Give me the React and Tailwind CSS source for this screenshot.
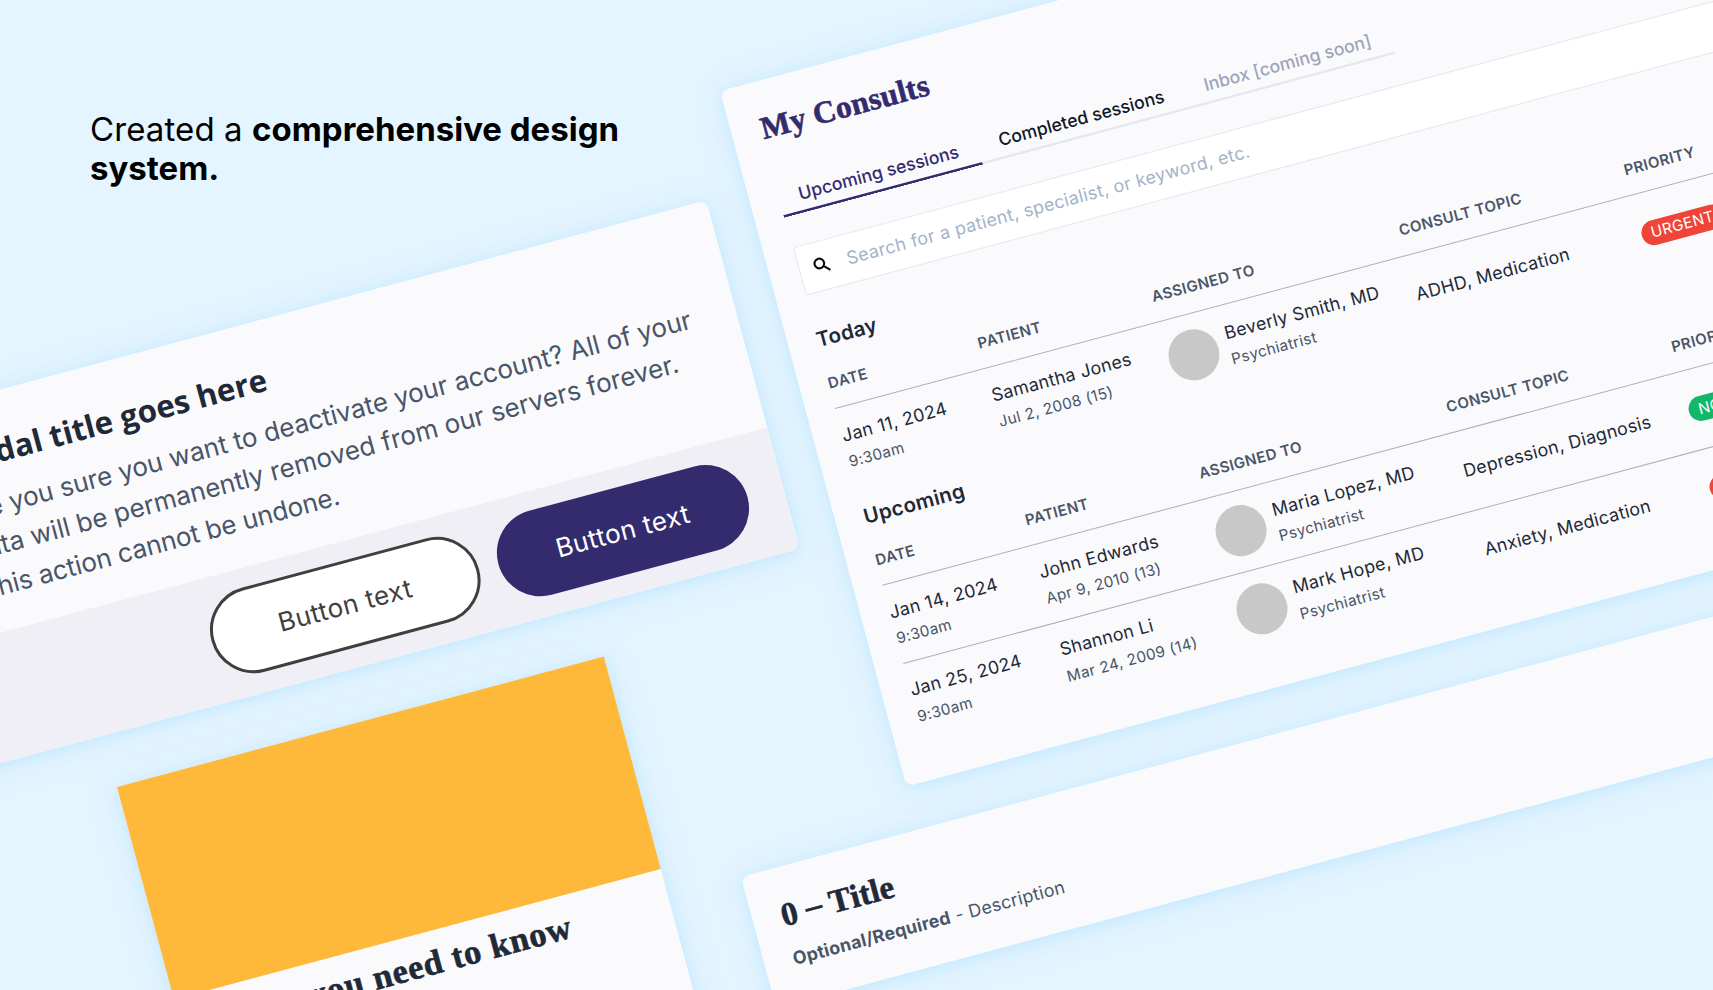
const SHADOW =
  "shadow-[0_2px_12px_rgba(170,228,255,0.5),0_3px_36px_rgba(208,234,255,0.75)]";

const SANS = "font-['Inter',sans-serif]";
const SERIF = "font-['Liberation_Serif',serif] [-webkit-text-stroke:0.6px_currentColor]";

const COLUMNS = "grid grid-cols-[155px_180px_256px_233px_1fr]";

const TODAY = [
  {
    date: "Jan 11, 2024",
    time: "9:30am",
    patient: "Samantha Jones",
    born: "Jul 2, 2008 (15)",
    doctor: "Beverly Smith, MD",
    topic: "ADHD, Medication",
    urgent: true,
  },
];

const UPCOMING = [
  {
    date: "Jan 14, 2024",
    time: "9:30am",
    patient: "John Edwards",
    born: "Apr 9, 2010 (13)",
    doctor: "Maria Lopez, MD",
    topic: "Depression, Diagnosis",
    urgent: false,
  },
  {
    date: "Jan 25, 2024",
    time: "9:30am",
    patient: "Shannon Li",
    born: "Mar 24, 2009 (14)",
    doctor: "Mark Hope, MD",
    topic: "Anxiety, Medication",
    urgent: true,
  },
];

function SearchIcon() {
  return (
    <svg viewBox="0 0 24 24" className="size-[21px] shrink-0 fill-black stroke-black stroke-[0.3]">
      <path d="M15.5 14h-.79l-.28-.27C15.41 12.59 16 11.11 16 9.5 16 5.91 13.09 3 9.5 3S3 5.91 3 9.5 5.91 16 9.5 16c1.61 0 3.09-.59 4.23-1.57l.27.28v.79l5 4.99L20.49 19l-4.99-5zm-6 0C7.01 14 5 11.99 5 9.5S7.01 5 9.5 5 14 7.01 14 9.5 11.99 14 9.5 14z" />
    </svg>
  );
}

function TwoLines({ main, sub }) {
  return (
    <div className="flex flex-col gap-[5.5px] pt-px">
      <div className="text-[17.8px] leading-6 tracking-[0.3px] text-[#1f2937]">{main}</div>
      <div className="text-[15.25px] leading-5 tracking-[0.33px] text-[#4a5568]">{sub}</div>
    </div>
  );
}

function Badge({ urgent }) {
  const color = urgent ? "bg-[#f04438]" : "bg-[#12b76a]";
  return (
    <span
      className={`${color} mt-0.5 flex h-[25px] w-fit items-center rounded-full px-[10px] text-[15.25px] leading-5 tracking-[0.3px] text-white`}
    >
      {urgent ? "URGENT" : "NON-URGENT"}
    </span>
  );
}

function SessionTable({ title, rows }) {
  return (
    <section>
      <h2 className="text-[20.5px] leading-7 font-semibold tracking-[0.3px] text-[#1f2937]">{title}</h2>
      <div
        className={`${COLUMNS} mt-[20.5px] h-[36.3px] border-b border-[#a9b2c0] text-[15px] leading-5 font-semibold tracking-[0.4px] text-[#4a5568]`}
      >
        <div>DATE</div>
        <div>PATIENT</div>
        <div>ASSIGNED TO</div>
        <div>CONSULT TOPIC</div>
        <div>PRIORITY</div>
      </div>
      {rows.map((row) => (
        <div
          key={row.date}
          className={`${COLUMNS} h-[80.9px] items-center border-b border-[#a9b2c0] last:border-transparent`}
        >
          <TwoLines main={row.date} sub={row.time} />
          <TwoLines main={row.patient} sub={row.born} />
          <div className="flex items-center gap-[10px]">
            <span className="size-[51px] shrink-0 rounded-full bg-[#c8c8c9]" />
            <TwoLines main={row.doctor} sub="Psychiatrist" />
          </div>
          <div className="text-[17.8px] leading-6 tracking-[0.3px] text-[#1f2937]">{row.topic}</div>
          <Badge urgent={row.urgent} />
        </div>
      ))}
    </section>
  );
}

function ConsultsCard() {
  return (
    <div
      className={`${SHADOW} ${SANS} absolute top-[90.6px] left-[719.6px] flex h-[720px] w-[1240px] origin-top-left -rotate-15 flex-col rounded-lg bg-[#fafafc] pt-7 pr-8 pl-[28.8px] whitespace-nowrap`}
    >
      <h1 className={`${SERIF} pl-px text-[31.5px] leading-10 font-bold tracking-[0.25px] text-[#332b6e]`}>
        My Consults
      </h1>
      <nav className="mt-[39.6px] flex text-center text-[17.65px] leading-6 font-medium">
        <div className="w-[206.3px] pb-[7.6px] text-[#332b6e] shadow-[inset_0_-2.5px_0_#332b6e]">
          Upcoming sessions
        </div>
        <div className="w-[213.5px] pb-[7.6px] text-gray-900 shadow-[inset_0_-2.5px_0_#e2e8f0]">
          Completed sessions
        </div>
        <div className="w-[213.5px] pb-[7.6px] text-[#9da5b9] shadow-[inset_0_-2.5px_0_#e2e8f0]">
          Inbox [coming soon]
        </div>
      </nav>
      <div className="mt-[30.8px] ml-px flex h-[50px] shrink-0 items-center gap-[14.8px] rounded border border-slate-200 bg-white pl-[12.6px]">
        <SearchIcon />
        <span className="text-[17.8px] leading-6 tracking-[0.34px] text-[#a3b3c9]">
          Search for a patient, specialist, or keyword, etc.
        </span>
      </div>
      <div className="mt-[32.4px] flex flex-col gap-[17px]">
        <SessionTable title="Today" rows={TODAY} />
        <SessionTable title="Upcoming" rows={UPCOMING} />
      </div>
    </div>
  );
}

function ModalCard() {
  return (
    <div
      className={`${SHADOW} ${SANS} absolute top-[441.3px] left-[-192.3px] flex h-[361px] w-[930px] origin-top-left -rotate-15 flex-col overflow-hidden rounded-lg bg-[#fafafc] whitespace-nowrap`}
    >
      <div className="h-[235px] pt-[38px] pl-[129px]">
        <h2 className="font-['Open_Sans',sans-serif] text-[31.3px] leading-10 font-bold tracking-[0.02px] text-[#1f2937]">
          Modal title goes here
        </h2>
        <p className="mt-[12.7px] text-[26px] leading-[39.7px] text-[#4a5568]">
          <span className="tracking-[-0.02px]">Are you sure you want to deactivate your account? All of your</span>
          <br />
          <span className="tracking-[0.05px]">data will be permanently removed from our servers forever.</span>
          <br />
          <span className="tracking-[-0.1px]">This action cannot be undone.</span>
        </p>
      </div>
      <div className="flex flex-1 items-center justify-end gap-5 bg-[#f0eff5] pr-[37.5px] pb-[2px] text-[26px] tracking-[0.45px]">
        <button className="h-[87px] w-[277.5px] rounded-full border-[3px] border-[#3f3f3f] bg-white text-[#3f3f3f]">
          Button text
        </button>
        <button className="h-[87px] w-[257.4px] rounded-full bg-[#332b6e] text-white">Button text</button>
      </div>
    </div>
  );
}

function ArticleCard() {
  return (
    <div
      className={`${SHADOW} absolute top-[787.1px] left-[117.3px] flex h-[480px] w-[503.5px] origin-top-left -rotate-15 flex-col bg-[#fafafc] whitespace-nowrap`}
    >
      <div className="h-[220px] bg-[#feb93a]" />
      <h2 className={`${SERIF} pt-[11px] pl-[37px] text-[34.5px] leading-10 font-bold tracking-[0.8px] text-[#1f2937]`}>
        What you need to know
      </h2>
    </div>
  );
}

function TitleCard() {
  return (
    <div
      className={`${SHADOW} ${SANS} absolute top-[876.6px] left-[741.4px] flex h-[135.8px] w-[1300px] origin-top-left -rotate-15 flex-col rounded-lg bg-[#fafafc] pt-[27.6px] pl-[29px] whitespace-nowrap`}
    >
      <h2 className={`${SERIF} text-[33px] leading-10 font-bold tracking-[0.2px] text-[#1f2937]`}>
        0 <span className="relative -top-0.5">–</span> Title
      </h2>
      <p className="mt-[13.5px] text-[17.8px] leading-6 tracking-[0.28px] text-[#4a5568]">
        <strong className="font-bold">Optional/Required</strong> - Description
      </p>
    </div>
  );
}

export default function App() {
  return (
    <main className="relative h-screen w-screen overflow-hidden bg-[#e4f5ff]">
      <p className={`${SANS} w-[560px] pt-[109.5px] ml-[90px] text-[33px] leading-[39px] text-black`}>
        <span className="tracking-[0.1px]">Created a </span>
        <strong className="font-bold">comprehensive design system.</strong>
      </p>
      <ModalCard />
      <ArticleCard />
      <ConsultsCard />
      <TitleCard />
    </main>
  );
}
